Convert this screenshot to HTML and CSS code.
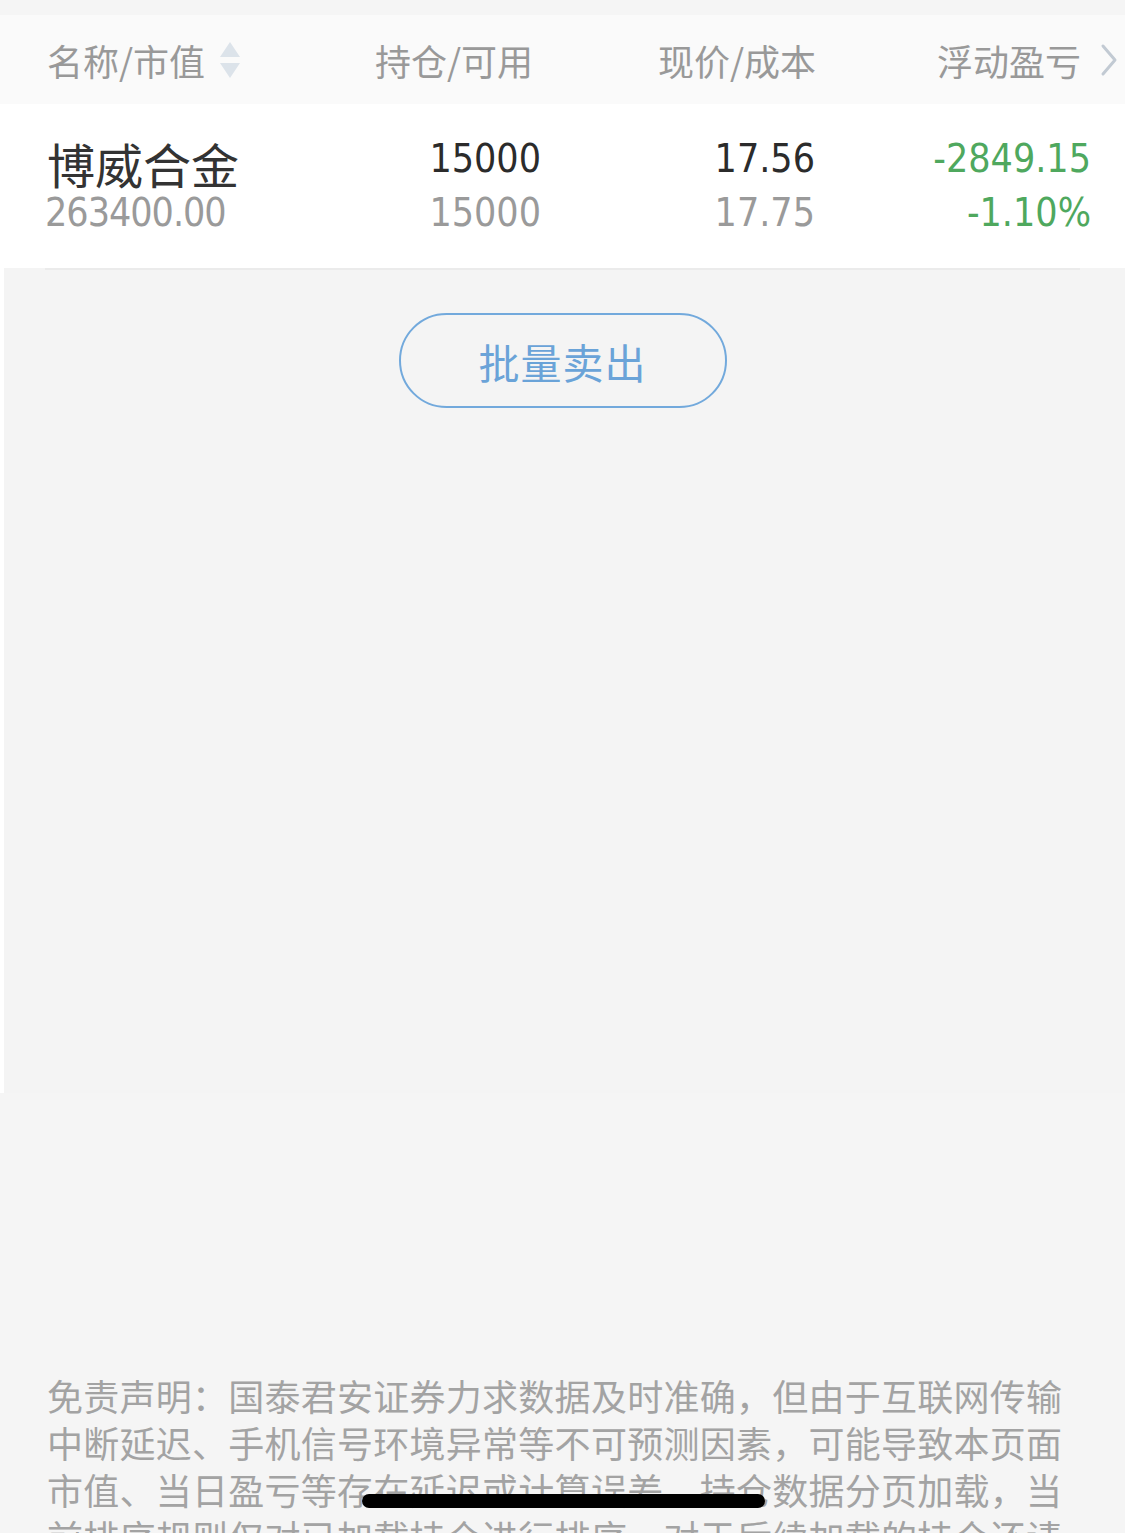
FILE: index.html
```html
<!DOCTYPE html>
<html lang="zh-CN">
<head>
    <meta charset="UTF-8">
    <meta name="viewport" content="width=device-width, initial-scale=1.0">
    <title>持仓</title>
    <link rel="stylesheet" href="styles.css">
</head>
<body>
    <div class="top-gap"></div>

    <div class="list-head">
        <div class="col-name">
            <span>名称/市值</span>
            <svg class="sort-icon" width="22" height="40" viewBox="0 0 22 40">
                <path d="M11 2 L21 17 L1 17 Z" fill="#dce3ea"/>
                <path d="M1 23 L21 23 L11 38 Z" fill="#dce3ea"/>
            </svg>
        </div>
        <div class="col-hold">持仓/可用</div>
        <div class="col-price">现价/成本</div>
        <div class="col-profit">浮动盈亏</div>
        <svg class="more-icon" width="18" height="34" viewBox="0 0 18 34">
            <path d="M3 3 L15 17 L3 31" fill="none" stroke="#c2cad3" stroke-width="3" stroke-linecap="round" stroke-linejoin="round"/>
        </svg>
    </div>

    <div class="stock-row">
        <div class="cell-name">
            <div class="stock-name">博威合金</div>
            <div class="num sub">263400.00</div>
        </div>
        <div class="cell-hold">
            <div class="num top main">15000</div>
            <div class="num sub">15000</div>
        </div>
        <div class="cell-price">
            <div class="num top main">17.56</div>
            <div class="num sub">17.75</div>
        </div>
        <div class="cell-profit">
            <div class="num top down">-2849.15</div>
            <div class="num down">-1.10%</div>
        </div>
    </div>

    <div class="list-body">
        <div class="divider"></div>
        <div class="actions">
            <button class="batch-sell">批量卖出</button>
        </div>
    </div>

    <div class="disclaimer">
        <span class="line">免责声明：国泰君安证券力求数据及时准确，但由于互联网传输</span>
        <span class="line">中断延迟、手机信号环境异常等不可预测因素，可能导致本页面</span>
        <span class="line">市值、当日盈亏等存在延迟或计算误差。持仓数据分页加载，当</span>
        <span class="line">前排序规则仅对已加载持仓进行排序，对于后续加载的持仓还请</span>
        <span class="line">以实际为准。</span>
    </div>

    <div class="home-bar"></div>
</body>
</html>
```

FILE: styles.css
```css
body {
    margin: 0;
    padding: 0;
    width: 1125px;
    height: 1533px;
    overflow: hidden;
    background-color: #f5f5f5;
    font-family: "Noto Sans CJK SC", "Noto Sans", sans-serif;
    color: #333;
}
.top-gap {
    height: 15px;
    background-color: #f5f5f5;
}
.list-head {
    height: 89px;
    background-color: #fafafa;
    display: flex;
    align-items: center;
    padding-left: 47px;
    font-size: 36px;
    color: #999;
}
.col-name {
    width: 200px;
    display: flex;
    align-items: center;
}
.sort-icon {
    margin-left: 14px;
}
.col-hold {
    width: 286px;
    text-align: right;
}
.col-price {
    width: 283px;
    text-align: right;
}
.col-profit {
    width: 265px;
    text-align: right;
}
.more-icon {
    margin-left: 19px;
}
.stock-row {
    background-color: #fff;
    display: flex;
    padding: 34px 0 30px 47px;
}
.cell-name {
    width: 250px;
}
.cell-hold {
    width: 244px;
    text-align: right;
}
.cell-price {
    width: 274px;
    text-align: right;
}
.cell-profit {
    width: 276px;
    text-align: right;
}
.stock-name {
    font-size: 48px;
    line-height: 50px;
    color: #333;
}
.num {
    font-family: "DejaVu Sans", sans-serif;
    font-stretch: condensed;
    font-size: 39px;
    line-height: 50px;
}
.num.top {
    line-height: 42px;
    margin-bottom: 8px;
}
.num.main {
    color: #2b2b2b;
}
.num.sub {
    color: #9a9a9a;
}
.num.down {
    color: #4fa85e;
}
.cell-name .num.sub {
    margin-left: -2px;
    letter-spacing: -1px;
}
.list-body {
    height: 825px;
    background-color: #f4f4f4;
    border-left: 4px solid #fff;
}
.divider {
    height: 2px;
    margin: 0 45px 0 41px;
    background-color: #ebebeb;
}
.actions {
    display: flex;
    justify-content: center;
    padding-top: 43px;
    padding-right: 4px;
}
.batch-sell {
    width: 328px;
    height: 95px;
    border: 2px solid #72a9dc;
    border-radius: 48px;
    background-color: transparent;
    font-family: "Noto Sans CJK SC", sans-serif;
    font-size: 41px;
    color: #6aa3d8;
    letter-spacing: 1px;
    padding: 0;
}
.disclaimer {
    margin-top: 279px;
    padding: 0 63px 0 47px;
    font-size: 36px;
    line-height: 47px;
    color: #a3a3a3;
}
.disclaimer .line {
    display: block;
    white-space: nowrap;
    text-align: justify;
    text-align-last: justify;
}
.home-bar {
    position: fixed;
    left: 362px;
    bottom: 25px;
    width: 403px;
    height: 14px;
    border-radius: 7px;
    background-color: #000;
}
```
